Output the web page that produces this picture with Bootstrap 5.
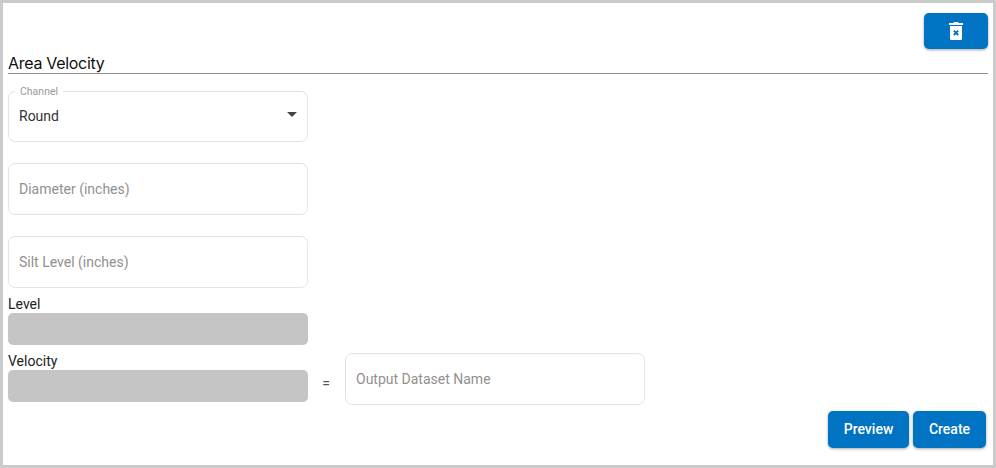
<!DOCTYPE html>
<html lang="en">
<head>
    <meta charset="UTF-8">
    <meta name="viewport" content="width=device-width, initial-scale=1.0">
    <title>Area Velocity</title>
    <link href="https://cdn.jsdelivr.net/npm/bootstrap@5.3.0/dist/css/bootstrap.min.css" rel="stylesheet">
    <style>
        html, body { height: 100%; }
        body {
            font-family: Roboto, "Liberation Sans", sans-serif;
            font-size: 14px;
            background: #fff;
            overflow: hidden;
        }
        .frame {
            height: 468px;
            border: 3px solid #cbcbcb;
            padding: 10px 5px 0 5px;
        }
        .head-row { height: 60px; }
        .page-title {
            font-family: Inter, Roboto, sans-serif;
            font-size: 16px;
            font-weight: 400;
            letter-spacing: -0.3px;
            margin: 0 0 6px 0;
            color: #111;
        }
        .btn-blue {
            background: #0074c2;
            border: 0;
            border-radius: 5px;
            color: #fff;
            font-size: 14px;
            font-weight: 500;
            box-shadow: 0 1px 3px rgba(0, 0, 0, .35);
        }
        .btn-blue:hover { background: #0068ae; color: #fff; }
        .btn-trash { width: 64px; height: 36px; padding: 0; }
        .btn-preview { width: 81px; height: 37px; padding: 0; }
        .btn-create { width: 73px; height: 37px; padding: 0; }
        .divider { height: 1px; background: #8f8f8f; margin: 0; }
        .col-fields { width: 300px; }
        .field {
            height: 52px;
            border: 1px solid #dbe6ea;
            border-radius: 7px;
            padding: 0 10px;
            font-size: 14px;
            color: #333;
            box-shadow: none;
        }
        .field::placeholder { color: #948f8f; opacity: 1; }
        .channel-box { margin-top: 17px; height: 51px; position: relative; }
        .channel-box .legend-text {
            position: absolute;
            top: -6px;
            left: 6px;
            background: #fff;
            padding: 0 5px;
            font-size: 10.5px;
            line-height: 12px;
            color: #9a9a9a;
        }
        .caret-down {
            width: 0;
            height: 0;
            border-left: 5px solid transparent;
            border-right: 5px solid transparent;
            border-top: 5px solid #444;
            margin-top: -4px;
        }
        .gap-field { margin-top: 21px; }
        .mini-label { font-size: 14px; line-height: 17px; color: #222; margin: 0; }
        .gray-bar { height: 32px; background: #c5c5c5; border-radius: 5px; }
        .eq-sign { width: 37px; padding-right: 1px; color: #555; margin-top: 9px; }
        .output-col { width: 300px; }
        .btn-bar { margin-top: 6px; padding-right: 2px; }
    </style>
</head>
<body>
    <div class="frame">
        <div class="d-flex justify-content-between align-items-start head-row">
            <h1 class="page-title align-self-end mb-0 title-pos">Area Velocity</h1>
            <button type="button" class="btn btn-blue btn-trash d-flex align-items-center justify-content-center" aria-label="Delete">
                <svg width="14" height="18" viewBox="0 0 14 18">
                    <path fill="#fff" d="M5 0h4l.6 1H14v2H0V1h4.4zM1 4h12v12.5a1.5 1.5 0 0 1-1.5 1.5h-9A1.5 1.5 0 0 1 1 16.5z"/>
                    <path stroke="#0074c2" stroke-width="1.8" d="M4.8 8.6l4.4 4.4M9.2 8.6l-4.4 4.4"/>
                </svg>
            </button>
        </div>
        <div class="divider"></div>

        <div class="col-fields">
            <div class="field channel-box d-flex align-items-center justify-content-between">
                <span class="legend-text">Channel</span>
                <span>Round</span>
                <span class="caret-down"></span>
            </div>
            <input type="text" class="form-control field gap-field" placeholder="Diameter (inches)">
            <input type="text" class="form-control field gap-field" placeholder="Silt Level (inches)">
            <p class="mini-label mt-2 pt-0">Level</p>
            <div class="gray-bar"></div>
        </div>

        <div class="d-flex align-items-start velocity-row mt-2">
            <div class="col-fields">
                <p class="mini-label">Velocity</p>
                <div class="gray-bar"></div>
            </div>
            <div class="eq-sign text-center align-self-center">=</div>
            <div class="output-col">
                <input type="text" class="form-control field" placeholder="Output Dataset Name">
            </div>
        </div>

        <div class="d-flex justify-content-end gap-1 btn-bar">
            <button type="button" class="btn btn-blue btn-preview">Preview</button>
            <button type="button" class="btn btn-blue btn-create">Create</button>
        </div>
    </div>
    <script src="https://cdn.jsdelivr.net/npm/bootstrap@5.3.0/dist/js/bootstrap.bundle.min.js"></script>
</body>
</html>
